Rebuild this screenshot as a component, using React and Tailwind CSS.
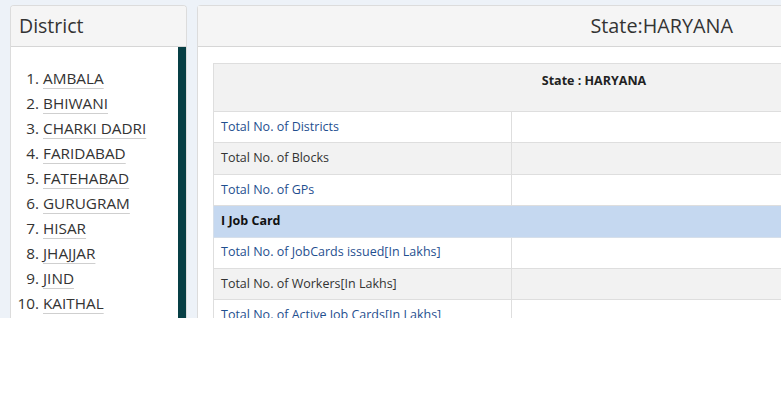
const districts = [
  "AMBALA",
  "BHIWANI",
  "CHARKI DADRI",
  "FARIDABAD",
  "FATEHABAD",
  "GURUGRAM",
  "HISAR",
  "JHAJJAR",
  "JIND",
  "KAITHAL",
];

const rows = [
  { label: "Total No. of Districts", link: true },
  { label: "Total No. of Blocks" },
  { label: "Total No. of GPs", link: true },
  { section: "I Job Card" },
  { label: "Total No. of JobCards issued[In Lakhs]", link: true },
  { label: "Total No. of Workers[In Lakhs]" },
  { label: "Total No. of Active Job Cards[In Lakhs]", link: true },
];

export default function App() {
  return (
    <div className="h-[399px] w-[781px] overflow-hidden bg-white font-['Open_Sans',sans-serif]">
      <div className="flex h-[318px] gap-[10px] overflow-hidden bg-[#edf2f8] pl-[10px] pt-[5px]">
        {/* district list */}
        <div className="flex w-[177px] shrink-0 flex-col overflow-hidden rounded-t-[4px] border border-b-0 border-[#dcdcdc] bg-white">
          <div className="h-[41px] shrink-0 border-b border-[#d6d6d6] bg-[#f5f5f5] pl-[8px] pt-[9px] text-[19.5px] leading-[22px] text-[#333]">
            District
          </div>
          <div className="flex min-h-0 flex-1">
            <ol className="flex-1 pt-[19px] text-[15.3px] leading-[25px] text-[#333]">
              {districts.map((d, i) => (
                <li key={d} className="flex">
                  <span className="w-[28px] shrink-0 text-right">{i + 1}.</span>
                  <span className="ml-[4px] underline decoration-[#cfcfcf] decoration-1 underline-offset-[4px]">
                    {d}
                  </span>
                </li>
              ))}
            </ol>
            <div className="w-[8px] shrink-0 bg-[#073f45]" />
          </div>
        </div>

        {/* state summary */}
        <div className="flex min-w-0 flex-1 flex-col rounded-tl-[4px] border border-r-0 border-b-0 border-[#dcdcdc] bg-white">
          <div className="flex h-[41px] shrink-0 justify-end border-b border-[#d6d6d6] bg-[#f5f5f5] pr-[48px] pt-[9px] text-[19.8px] leading-[22px] text-[#333]">
            State:HARYANA
          </div>
          <div className="pl-[15px] pt-[16px]">
            <table className="w-[762px] border-collapse text-[12.5px] text-[#333]">
              <thead>
                <tr className="h-[48px] bg-[#f2f2f2]">
                  <th
                    colSpan={2}
                    className="border border-[#dedede] pb-[12px] text-center text-[12.5px] font-bold text-[#222]"
                  >
                    State : HARYANA
                  </th>
                </tr>
              </thead>
              <tbody>
                {rows.map((r) =>
                  r.section ? (
                    <tr key={r.section} className="h-[31.4px] bg-[#c5d8f0]">
                      <td colSpan={2} className="border border-[#d6dfea] px-[7px] font-bold text-[#111]">
                        {r.section}
                      </td>
                    </tr>
                  ) : (
                    <tr key={r.label} className={`h-[31.4px] ${r.link ? "bg-white" : "bg-[#f2f2f2]"}`}>
                      <td
                        className={`w-[298px] border border-[#dedede] px-[7px] ${
                          r.link ? "text-[#1f4f8f]" : "text-[#333]"
                        }`}
                      >
                        {r.label}
                      </td>
                      <td className="border border-[#dedede]" />
                    </tr>
                  )
                )}
              </tbody>
            </table>
          </div>
        </div>
      </div>
    </div>
  );
}
